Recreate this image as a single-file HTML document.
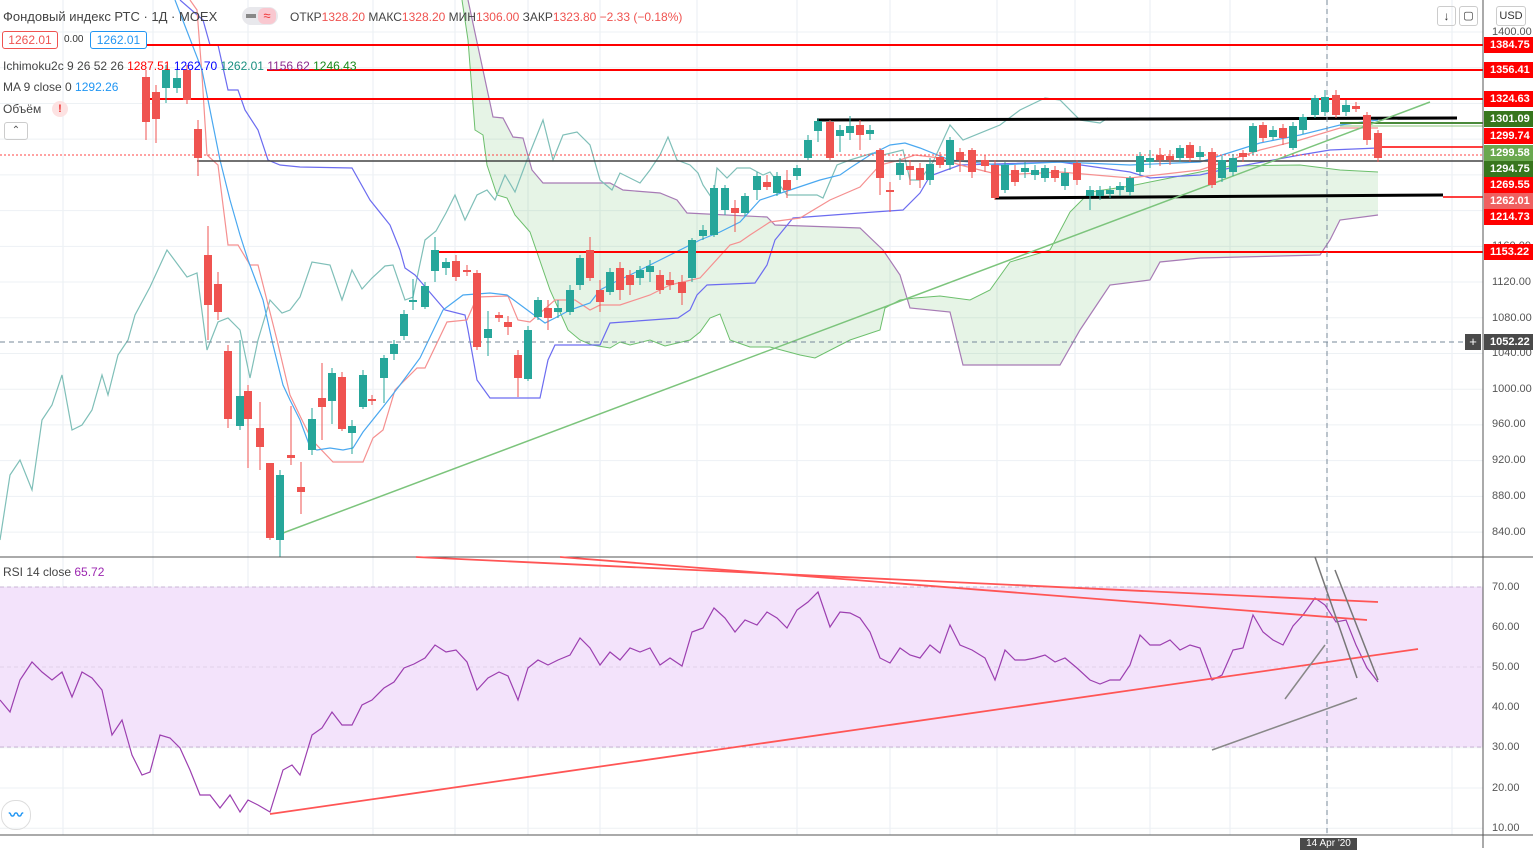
<!DOCTYPE html>
<html><head><meta charset="utf-8"><style>
body{margin:0;width:1533px;height:848px;overflow:hidden;background:#fff;font-family:"Liberation Sans",sans-serif;position:relative}
svg{position:absolute;left:0;top:0}
.t{position:absolute;font-size:12px;color:#555;white-space:nowrap}
.lab{position:absolute;left:1484px;width:49px;height:16px;font-size:11px;font-weight:bold;color:#fff;line-height:16px;padding-left:6px;box-sizing:border-box}
.ax{position:absolute;left:1492px;font-size:11px;color:#555}
.bx{position:absolute;top:31px;height:18px;box-sizing:border-box;border-radius:3px;background:#fff;font-size:12px;line-height:16px;text-align:center}
</style></head><body>
<svg id="s" width="1533" height="848"></svg>
<div class="t" style="left:3px;top:9px;font-size:13px;color:#444">Фондовый индекс РТС · 1Д · MOEX</div>
<div class="t" style="left:242px;top:7px;width:36px;height:18px;border-radius:9px;background:#e8e8ec"></div>
<div class="t" style="left:246px;top:14px;width:10px;height:4px;background:#888"></div>
<div class="t" style="left:258px;top:8px;width:18px;height:16px;border-radius:6px;background:#f9c8d0;color:#e33;font-size:13px;text-align:center">≈</div>
<div class="t" style="left:290px;top:10px;color:#444">ОТКР<span style="color:#ef5350">1328.20</span> МАКС<span style="color:#ef5350">1328.20</span> МИН<span style="color:#ef5350">1306.00</span> ЗАКР<span style="color:#ef5350">1323.80</span> <span style="color:#ef5350">−2.33 (−0.18%)</span></div>
<div class="bx" style="left:2px;width:56px;border:1px solid #ef5350;color:#ef5350">1262.01</div>
<div class="t" style="left:64px;top:34px;font-size:10px;color:#333">0.00</div>
<div class="bx" style="left:90px;width:57px;border:1px solid #2196f3;color:#2196f3">1262.01</div>
<div class="t" style="left:3px;top:59px;color:#444">Ichimoku2c 9 26 52 26 <span style="color:#f00">1287.51</span> <span style="color:#00f">1262.70</span> <span style="color:#1a8f80">1262.01</span> <span style="color:#8e2d8e">1156.62</span> <span style="color:#1a8a1a">1246.43</span></div>
<div class="t" style="left:3px;top:80px;color:#444">MA 9 close 0 <span style="color:#2196f3">1292.26</span></div>
<div class="t" style="left:3px;top:102px;color:#444">Объём</div>
<div class="t" style="left:52px;top:101px;width:16px;height:16px;border-radius:8px;background:#fde2e2;color:#e33;font-size:11px;text-align:center;line-height:16px;font-weight:bold">!</div>
<div class="t" style="left:4px;top:122px;width:22px;height:16px;border:1px solid #ccc;border-radius:3px;text-align:center;font-size:10px;line-height:16px">⌃</div>
<div class="t" style="left:1437px;top:6px;width:17px;height:18px;border:1px solid #ccc;border-radius:3px;text-align:center;font-size:12px;line-height:18px;color:#333">↓</div>
<div class="t" style="left:1459px;top:6px;width:17px;height:18px;border:1px solid #ccc;border-radius:3px;text-align:center;font-size:11px;line-height:18px;color:#333">▢</div>
<div class="t" style="left:1496px;top:6px;width:28px;height:18px;border:1px solid #ccc;border-radius:3px;text-align:center;font-size:11px;line-height:18px;color:#333">USD</div>
<div class="t" style="left:3px;top:565px;color:#444">RSI 14 close <span style="color:#9c27b0">65.72</span></div>
<div class="t" style="left:1px;top:800px;width:28px;height:28px;border-radius:14px;border:1px solid #ddd;color:#2196f3;text-align:center;line-height:28px;font-size:14px;font-weight:bold">〰</div>
<div id="labs"></div>
<div class="t" style="left:1300px;top:838px;width:57px;height:12px;background:#4a4a4a;color:#fff;font-size:10px;text-align:center">14 Apr '20</div>
<script>
var s=document.getElementById('s'),h='';
function L(x1,y1,x2,y2,c,w,d){h+='<line x1="'+x1+'" y1="'+y1+'" x2="'+x2+'" y2="'+y2+'" stroke="'+c+'" stroke-width="'+(w||1)+'"'+(d?' stroke-dasharray="'+d+'"':'')+'/>';}
function P(pts,c,w,f){h+='<polyline points="'+pts+'" fill="'+(f||'none')+'" stroke="'+c+'" stroke-width="'+(w||1)+'"/>';}
[63,153,248,373,455,528,600,697,797,890,997,1075,1150,1230,1327,1452].forEach(function(x){L(x,0,x,835,'#e8eef3');});
for(var p=1400;p>=840;p-=40){var y=32+(1400-p)*0.893;L(0,y,1483,y,'#edf1f4');}
for(var v=70;v>=10;v-=10){var y=587+(70-v)*4.02;L(0,y,1483,y,'#edf1f4');}
h+='<rect x="0" y="587" width="1483" height="160" fill="#f3e3fb"/>';
L(0,587,1483,587,'#c9b4d4',1,'4 3');L(0,747,1483,747,'#c9b4d4',1,'4 3');L(0,667,1483,667,'#e0d0ea',1,'4 3');
var A='462,0 468,40 475,130 483,135 487,165 497,195 507,198 515,215 530,232 550,290 568,330 580,340 592,345 610,348 620,342 630,345 650,340 665,346 690,340 700,332 710,318 720,314 730,340 750,347 770,347 800,355 815,358 850,340 880,330 885,308 900,300 915,298 940,296 970,300 990,290 1010,262 1050,250 1070,212 1090,192 1130,186 1200,172 1230,166 1300,165 1340,170 1378,172';
var B='468,0 493,117 503,118 513,137 523,138 532,170 543,183 610,183 623,190 660,193 677,200 687,213 767,217 775,225 860,228 883,250 900,275 910,308 950,312 963,365 975,365 1060,365 1080,330 1100,300 1110,285 1150,280 1160,262 1200,258 1320,255 1330,240 1340,220 1378,215';
var Br=B.split(' ').reverse().join(' ');
h+='<polygon points="'+A+' '+Br+'" fill="rgba(76,175,80,0.14)"/>';
P(A,'#6cbf6c',1);P(B,'#a77bb5',1.2);
P('0,540 10,475 20,460 32,490 42,420 52,405 62,375 72,430 82,425 92,410 102,375 108,395 118,355 128,340 135,315 150,287 167,250 187,277 197,273 207,350 218,322 228,318 240,330 250,378 258,340 270,300 282,313 290,310 300,297 312,262 330,265 342,300 352,270 362,289 372,278 385,266 393,265 405,300 413,297 425,240 436,231 446,213 455,195 465,220 477,195 487,190 495,200 505,175 515,192 527,160 543,120 553,160 563,135 577,132 590,145 600,180 612,190 620,173 640,183 650,170 660,155 668,137 677,160 690,165 698,173 703,185 713,200 717,168 727,178 737,168 750,168 763,175 770,172 787,195 817,195 823,198 837,165 850,160 873,153 883,155 903,150 910,180 920,180 933,162 950,125 963,140 1000,125 1020,110 1045,98 1060,100 1080,120 1100,123 1108,118','#7fbfb8',1.2);
P('180,0 203,20 210,45 218,45 228,90 238,90 245,110 258,130 268,160 280,165 300,167 352,168 370,200 390,225 400,250 405,268 415,275 445,310 465,315 468,330 477,380 490,398 540,398 548,360 555,345 600,345 610,323 678,318 690,310 697,295 707,285 755,283 767,265 775,240 793,218 860,213 903,210 920,193 930,176 960,165 1060,162 1130,172 1150,178 1200,175 1230,168 1300,155 1330,150 1378,148','#6c6cf0',1.2);
P('190,0 197,10 202,75 207,155 218,165 228,245 238,245 250,265 258,265 277,340 290,395 302,420 312,440 333,462 363,462 373,438 383,430 395,390 417,368 425,368 447,322 467,320 477,297 508,296 518,320 530,322 555,300 575,300 590,310 600,305 620,305 650,295 670,285 700,278 730,245 740,242 750,235 770,222 800,218 830,200 860,187 880,165 900,160 915,155 940,158 960,165 1000,175 1060,172 1130,178 1200,170 1260,150 1300,140 1340,128 1378,128','#f59090',1.2);
P('175,0 202,70 210,110 220,160 230,200 240,235 248,260 263,300 273,345 283,385 290,400 300,420 310,447 317,450 330,448 343,450 353,448 363,432 383,407 400,385 420,358 443,310 463,295 490,293 507,295 530,312 545,323 555,318 570,310 590,303 600,290 615,282 630,275 650,265 670,255 700,240 720,232 740,222 760,200 790,190 820,180 840,175 850,168 870,155 890,145 905,143 920,148 950,160 1000,165 1060,162 1130,165 1200,162 1260,143 1300,135 1340,125 1378,120','#4aa8f0',1.2);
L(0,155,1483,155,'#f44',1,'2 2');
L(147,45,1483,45,'#f00',2);L(267,70,1483,70,'#f00',2);L(145,99,1483,99,'#f00',2);
L(197,161,1483,161,'#444',1.5);L(437,252,1483,252,'#f00',2);
L(1380,147,1483,147,'#f00',1.5);L(1443,197,1483,197,'#f00',1.5);
L(1340,123,1483,123,'#4a8a3a',2);L(1340,126,1483,126,'#8bc47a',1);
L(817,120,1457,118,'#000',3);L(995,198,1443,195,'#000',3);
L(283,533,1430,102,'#7cc47c',1.5);
L(0,342,1483,342,'#789',1,'5 4');L(1327,0,1327,835,'#789',1,'5 4');
var c=[[146,77,122,70,140,0],[156,92,119,85,143,0],[166,70,88,65,103,1],[177,78,88,70,93,1],[187,70,100,65,104,0],[198,129,158,120,176,0],[208,255,305,226,340,0],[218,284,312,272,320,0],[228,351,419,345,428,0],[240,396,426,340,430,1],[248,391,419,385,468,0],[260,428,447,402,470,0],[270,463,538,463,540,0],[280,475,540,470,557,1],[291,455,458,406,465,0],[301,487,492,462,514,0],[312,419,450,408,455,1],[322,398,407,363,440,0],[332,373,401,368,424,1],[342,377,429,372,431,0],[352,426,433,420,454,1],[363,375,407,370,409,1],[372,399,401,395,405,0],[384,358,378,355,403,1],[394,344,354,340,360,1],[404,314,336,310,340,1],[413,300,302,279,310,1],[425,286,307,282,309,1],[435,250,271,237,282,1],[446,262,268,258,275,1],[456,261,277,255,281,0],[467,270,272,265,276,0],[477,273,347,270,350,0],[488,329,338,311,356,1],[499,315,318,312,322,0],[508,322,327,316,335,0],[518,355,378,350,397,0],[528,330,379,326,381,1],[538,300,317,297,320,1],[548,308,318,300,330,0],[558,308,312,300,318,1],[570,290,312,285,315,1],[580,258,285,255,290,1],[590,250,278,237,281,0],[600,290,302,280,312,0],[610,272,292,268,295,1],[620,268,290,262,300,0],[630,275,285,270,295,0],[640,270,278,266,285,1],[650,266,272,260,282,1],[660,275,290,270,294,0],[670,280,285,272,290,0],[682,282,293,275,305,0],[692,240,278,238,282,1],[703,230,236,225,240,1],[714,188,235,185,237,1],[725,188,210,185,215,1],[735,208,213,200,232,0],[745,196,213,193,216,1],[757,176,190,172,200,1],[767,182,187,175,190,0],[777,176,193,172,196,1],[787,180,190,170,198,0],[797,168,176,165,180,1],[808,140,158,135,160,1],[818,121,131,118,142,1],[830,122,158,120,160,0],[840,130,136,125,152,1],[850,126,133,116,140,1],[860,125,135,120,150,0],[870,130,134,125,140,1],[880,150,178,148,195,0],[890,190,192,182,212,0],[900,163,175,158,180,1],[910,166,170,160,185,0],[920,168,180,163,188,0],[930,164,180,158,185,1],[940,157,165,152,168,0],[950,140,165,137,170,1],[960,152,160,148,172,0],[972,150,172,148,178,0],[985,160,166,155,172,0],[995,165,198,160,200,0],[1005,165,190,162,193,1],[1015,170,182,165,186,0],[1025,168,172,162,178,1],[1035,170,175,165,180,1],[1045,168,178,165,182,1],[1055,170,178,166,182,0],[1065,173,186,168,190,1],[1077,163,180,160,185,0],[1090,190,196,186,210,1],[1100,190,196,186,200,1],[1110,190,194,186,198,1],[1120,186,190,182,196,1],[1130,178,192,176,196,1],[1140,156,172,152,176,1],[1150,158,162,150,168,1],[1160,155,160,148,166,0],[1170,156,160,150,165,0],[1180,148,158,145,162,1],[1190,145,158,142,162,0],[1200,152,157,146,160,1],[1212,152,185,148,188,0],[1222,160,178,156,182,1],[1233,158,172,154,176,1],[1243,153,157,150,162,0],[1253,126,152,123,155,1],[1263,125,138,122,142,0],[1273,130,137,126,140,1],[1283,128,138,124,145,0],[1293,126,148,122,150,1],[1303,117,130,114,134,1],[1315,98,115,95,118,1],[1325,97,112,90,116,1],[1336,95,115,90,118,0],[1346,105,112,100,116,1],[1356,106,109,102,112,0],[1367,115,140,112,145,0],[1378,133,158,130,162,0]];
c.forEach(function(k){var col=k[5]?'#26a69a':'#ef5350';L(k[0],k[3],k[0],k[4],col,1);h+='<rect x="'+(k[0]-4)+'" y="'+k[1]+'" width="8" height="'+Math.max(2,k[2]-k[1])+'" fill="'+col+'"/>';});
L(0,557,1533,557,'#555',1);
P('0,700 10,712 20,680 32,662 42,672 52,680 62,672 72,697 82,672 92,678 102,690 112,735 122,720 132,755 142,775 150,772 160,735 170,738 180,748 190,770 200,795 210,795 220,808 230,795 240,812 248,800 258,805 270,812 283,770 292,765 300,775 312,735 322,728 332,712 342,725 352,725 362,705 372,700 384,688 394,682 404,668 414,664 425,658 435,645 446,652 456,650 467,662 477,690 488,678 499,672 508,676 518,700 528,668 538,660 548,665 558,660 570,655 580,638 590,648 600,665 610,652 620,660 630,648 640,652 650,648 660,665 670,658 682,666 692,632 703,628 714,608 725,618 735,632 745,620 757,625 767,612 777,618 787,628 797,610 808,602 818,592 830,627 840,612 850,613 860,618 870,632 880,658 890,663 900,648 910,655 920,658 930,645 940,653 950,625 960,645 972,650 985,658 995,680 1005,650 1015,660 1025,660 1035,658 1045,655 1055,662 1065,658 1077,668 1090,680 1100,684 1110,680 1120,680 1130,665 1140,635 1150,645 1160,645 1170,640 1180,650 1190,645 1200,648 1212,680 1222,675 1233,650 1243,648 1253,615 1263,632 1273,640 1283,645 1293,626 1303,615 1315,598 1325,605 1336,622 1346,620 1356,645 1367,668 1378,682','#9c3fb0',1.2);
L(416,557,1378,602,'#f55',1.8);L(560,557,1367,620,'#f55',1.8);L(270,814,1418,649,'#f55',1.8);
L(1212,750,1357,698,'#888',1.5);L(1285,699,1325,645,'#888',1.5);L(1315,557,1357,678,'#777',1.5);L(1335,570,1378,680,'#777',1.5);
L(0,835,1533,835,'#555',1);L(1483,0,1483,848,'#555',1);
s.innerHTML=h;
var lb=[[45,'1384.75','#f00'],[70,'1356.41','#f00'],[99,'1324.63','#f00'],[119,'1301.09','#38761d'],[136,'1299.74','#f00'],[153,'1299.58','#6aa84f'],[169,'1294.75','#38761d'],[185,'1269.55','#f00'],[201,'1262.01','#ef6060'],[217,'1214.73','#f00'],[252,'1153.22','#f00'],[342,'1052.22','#4a4a4a']];
var o='';
[[32,'1400.00'],[246,'1160.00'],[282,'1120.00'],[318,'1080.00'],[353,'1040.00'],[389,'1000.00'],[424,'960.00'],[460,'920.00'],[496,'880.00'],[532,'840.00'],[587,'70.00'],[627,'60.00'],[667,'50.00'],[707,'40.00'],[747,'30.00'],[788,'20.00'],[828,'10.00']].forEach(function(a){o+='<div class="ax" style="top:'+(a[0]-6)+'px">'+a[1]+'</div>';});
lb.forEach(function(a){o+='<div class="lab" style="top:'+(a[0]-8)+'px;background:'+a[2]+'">'+a[1]+'</div>';});
o+='<div class="t" style="left:1465px;top:334px;width:16px;height:16px;background:#4a4a4a;color:#fff;text-align:center;line-height:16px;font-size:13px">+</div>';
document.getElementById('labs').innerHTML=o;
</script>
</body></html>
